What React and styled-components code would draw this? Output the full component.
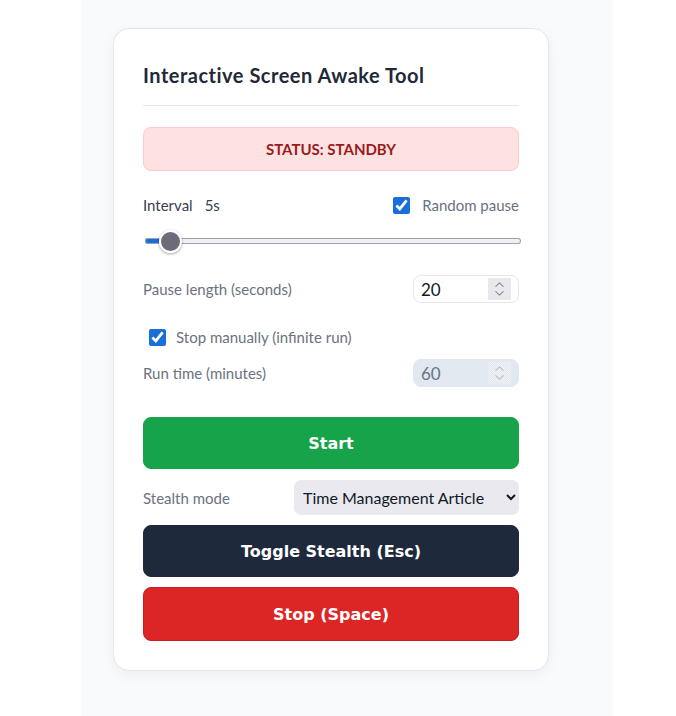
import React, { useState } from "react";
import styled, { createGlobalStyle } from "styled-components";

const FONT = `"Lato", "Noto Sans", sans-serif`;
const BUTTON_FONT = `"DejaVu Sans", Verdana, sans-serif`;

const Global = createGlobalStyle`
  html, body { margin: 0; padding: 0; background: #ffffff; }
  body { font-family: ${FONT}; }
  * { box-sizing: border-box; }
`;

const Page = styled.div`
  width: 532px;
  min-height: 716px;
  margin-left: 81px;
  background: #f8fafc;
  padding: 28px 32px 40px;
`;

const Card = styled.div`
  width: 436px;
  background: #ffffff;
  border: 1px solid #e5e7eb;
  border-radius: 16px;
  box-shadow: 0 4px 14px rgba(15, 23, 42, 0.05);
  padding: 32px 29px 29px;
  display: flex;
  flex-direction: column;
`;

const Title = styled.h1`
  margin: 0 0 21px;
  font-size: 20px;
  line-height: 28px;
  font-weight: 700;
  letter-spacing: 0.5px;
  color: #1f2937;
  padding-bottom: 16px;
  border-bottom: 1px solid #e5e7eb;
`;

const Status = styled.div`
  height: 44px;
  display: flex;
  align-items: center;
  justify-content: center;
  background: #fee2e2;
  border: 1px solid #fecaca;
  border-radius: 8px;
  color: #991b1b;
  font-weight: 700;
  font-size: 15px;
`;

const Row = styled.div`
  display: flex;
  align-items: center;
  justify-content: space-between;
  margin-top: ${(p) => p.$mt}px;
  min-height: ${(p) => p.$h || 24}px;
`;

const Group = styled.div`
  display: flex;
  align-items: center;
  gap: ${(p) => p.$gap || 10}px;
`;

const Label = styled.span`
  font-size: 15px;
  color: ${(p) => (p.$dark ? "#374151" : "#6b7280")};
`;

const Value = styled.span`
  font-size: 15px;
  color: #374151;
`;

const CheckLabel = styled.label`
  display: flex;
  align-items: center;
  gap: ${(p) => p.$gap}px;
  padding-left: ${(p) => p.$indent || 0}px;
  font-size: 15px;
  color: #6b7280;
  cursor: pointer;
`;

const Check = styled.input.attrs({ type: "checkbox" })`
  width: 17px;
  height: 17px;
  margin: 0;
  accent-color: #1a6ed8;
`;

const Range = styled.input.attrs({ type: "range" })`
  -webkit-appearance: none;
  appearance: none;
  display: block;
  width: 376px;
  height: 24px;
  margin: 12px 0 0 2px;
  background: transparent;

  &::-webkit-slider-runnable-track {
    height: 6px;
    border-radius: 3px;
    box-shadow: inset 0 0 0 1px #a1a1ae;
    background: linear-gradient(
      to right,
      #1a6ed8 0,
      #1a6ed8 ${(p) => p.$fill}px,
      #efeff4 ${(p) => p.$fill}px,
      #efeff4 100%
    );
  }
  &::-webkit-slider-thumb {
    -webkit-appearance: none;
    width: 23px;
    height: 23px;
    margin-top: -8.5px;
    border-radius: 50%;
    background: #6b6b7c;
    border: 2px solid #ffffff;
    box-shadow: 0 1px 3px rgba(0, 0, 0, 0.35);
  }
`;

const NumberField = styled.div`
  width: 106px;
  height: 28px;
  display: flex;
  align-items: center;
  padding: 0 7px 0 7px;
  border: 1px solid ${(p) => (p.$disabled ? "#e2e8f0" : "#e5e7eb")};
  border-radius: 8px;
  background: ${(p) => (p.$disabled ? "#e2e8f0" : "#ffffff")};
`;

const NumberInput = styled.input.attrs({ type: "number" })`
  flex: 1;
  min-width: 0;
  height: 100%;
  padding: 0;
  border: none;
  background: transparent;
  color: ${(p) => (p.disabled ? "#64748b" : "#111827")};
  font-family: ${FONT};
  font-size: 17px;
  outline: none;
  -moz-appearance: textfield;
  &::-webkit-inner-spin-button,
  &::-webkit-outer-spin-button {
    -webkit-appearance: none;
    margin: 0;
  }
`;

const Spinner = styled.div`
  width: 23px;
  height: 22px;
  display: flex;
  flex-direction: column;
  align-items: center;
  justify-content: center;
  gap: 4px;
  background: ${(p) =>
    p.$disabled
      ? "repeating-conic-gradient(#e4e9f0 0 25%, #eef1f5 0 50%) 0 0 / 2px 2px"
      : "#e9e9ed"};
  color: ${(p) => (p.$disabled ? "#b8bfca" : "#8a8a94")};
`;

const Chevron = ({ up }) => (
  <svg width="9" height="5" viewBox="0 0 9 5" fill="none">
    <path
      d={up ? "M0.8 4.3 L4.5 0.8 L8.2 4.3" : "M0.8 0.7 L4.5 4.2 L8.2 0.7"}
      stroke="currentColor"
      strokeWidth="1.1"
      strokeLinecap="round"
      strokeLinejoin="round"
    />
  </svg>
);

const Select = styled.select`
  width: 225px;
  height: 35px;
  border: none;
  border-radius: 7px;
  background: #e9e9ef;
  color: #111827;
  font-family: ${FONT};
  font-size: 16px;
  padding: 0 5px;
`;

const Button = styled.button`
  width: 100%;
  height: ${(p) => p.$h || 52}px;
  margin-top: ${(p) => p.$mt}px;
  border: 1px solid ${(p) => p.$border || p.$bg};
  border-radius: 8px;
  background: ${(p) => p.$bg};
  color: #ffffff;
  font-family: ${BUTTON_FONT};
  font-weight: 700;
  font-size: 16px;
  cursor: pointer;
`;

function NumberBox({ value, onChange, disabled }) {
  return (
    <NumberField $disabled={disabled}>
      <NumberInput value={value} onChange={onChange} disabled={disabled} readOnly={!onChange} />
      <Spinner $disabled={disabled}>
        <Chevron up />
        <Chevron />
      </Spinner>
    </NumberField>
  );
}

export default function App() {
  const [interval, setIntervalValue] = useState(5);
  const [random, setRandom] = useState(true);
  const [pause, setPause] = useState(20);
  const [manual, setManual] = useState(true);
  const [mode, setMode] = useState("article");
  const min = 1;
  const max = 100;
  const fill = 11 + ((interval - min) / (max - min)) * (376 - 23);

  return (
    <>
      <Global />
      <Page>
        <Card>
          <Title>Interactive Screen Awake Tool</Title>
          <Status>STATUS: STANDBY</Status>
          <Row $mt={22}>
            <Group $gap={12}>
              <Label $dark>Interval</Label>
              <Value>{interval}s</Value>
            </Group>
            <CheckLabel $gap={12}>
              <Check checked={random} onChange={(e) => setRandom(e.target.checked)} />
              Random pause
            </CheckLabel>
          </Row>
          <Range
            min={min}
            max={max}
            value={interval}
            $fill={fill}
            onChange={(e) => setIntervalValue(Number(e.target.value))}
          />
          <Row $mt={22} $h={28}>
            <Label>Pause length (seconds)</Label>
            <NumberBox value={pause} onChange={(e) => setPause(e.target.value)} />
          </Row>
          <Row $mt={22}>
            <CheckLabel $gap={10} $indent={6}>
              <Check checked={manual} onChange={(e) => setManual(e.target.checked)} />
              Stop manually (infinite run)
            </CheckLabel>
          </Row>
          <Row $mt={10} $h={28}>
            <Label>Run time (minutes)</Label>
            <NumberBox value={60} disabled={manual} />
          </Row>
          <Button $mt={30} $bg="#16a34a">Start</Button>
          <Row $mt={11} $h={35}>
            <Label>Stealth mode</Label>
            <Select value={mode} onChange={(e) => setMode(e.target.value)}>
              <option value="article">Time Management Article</option>
              <option value="sheet">Spreadsheet</option>
              <option value="code">Code Editor</option>
            </Select>
          </Row>
          <Button $mt={10} $bg="#1e293b">Toggle Stealth (Esc)</Button>
          <Button $mt={10} $h={54} $bg="#dc2626" $border="#c81e1e">Stop (Space)</Button>
        </Card>
      </Page>
    </>
  );
}
